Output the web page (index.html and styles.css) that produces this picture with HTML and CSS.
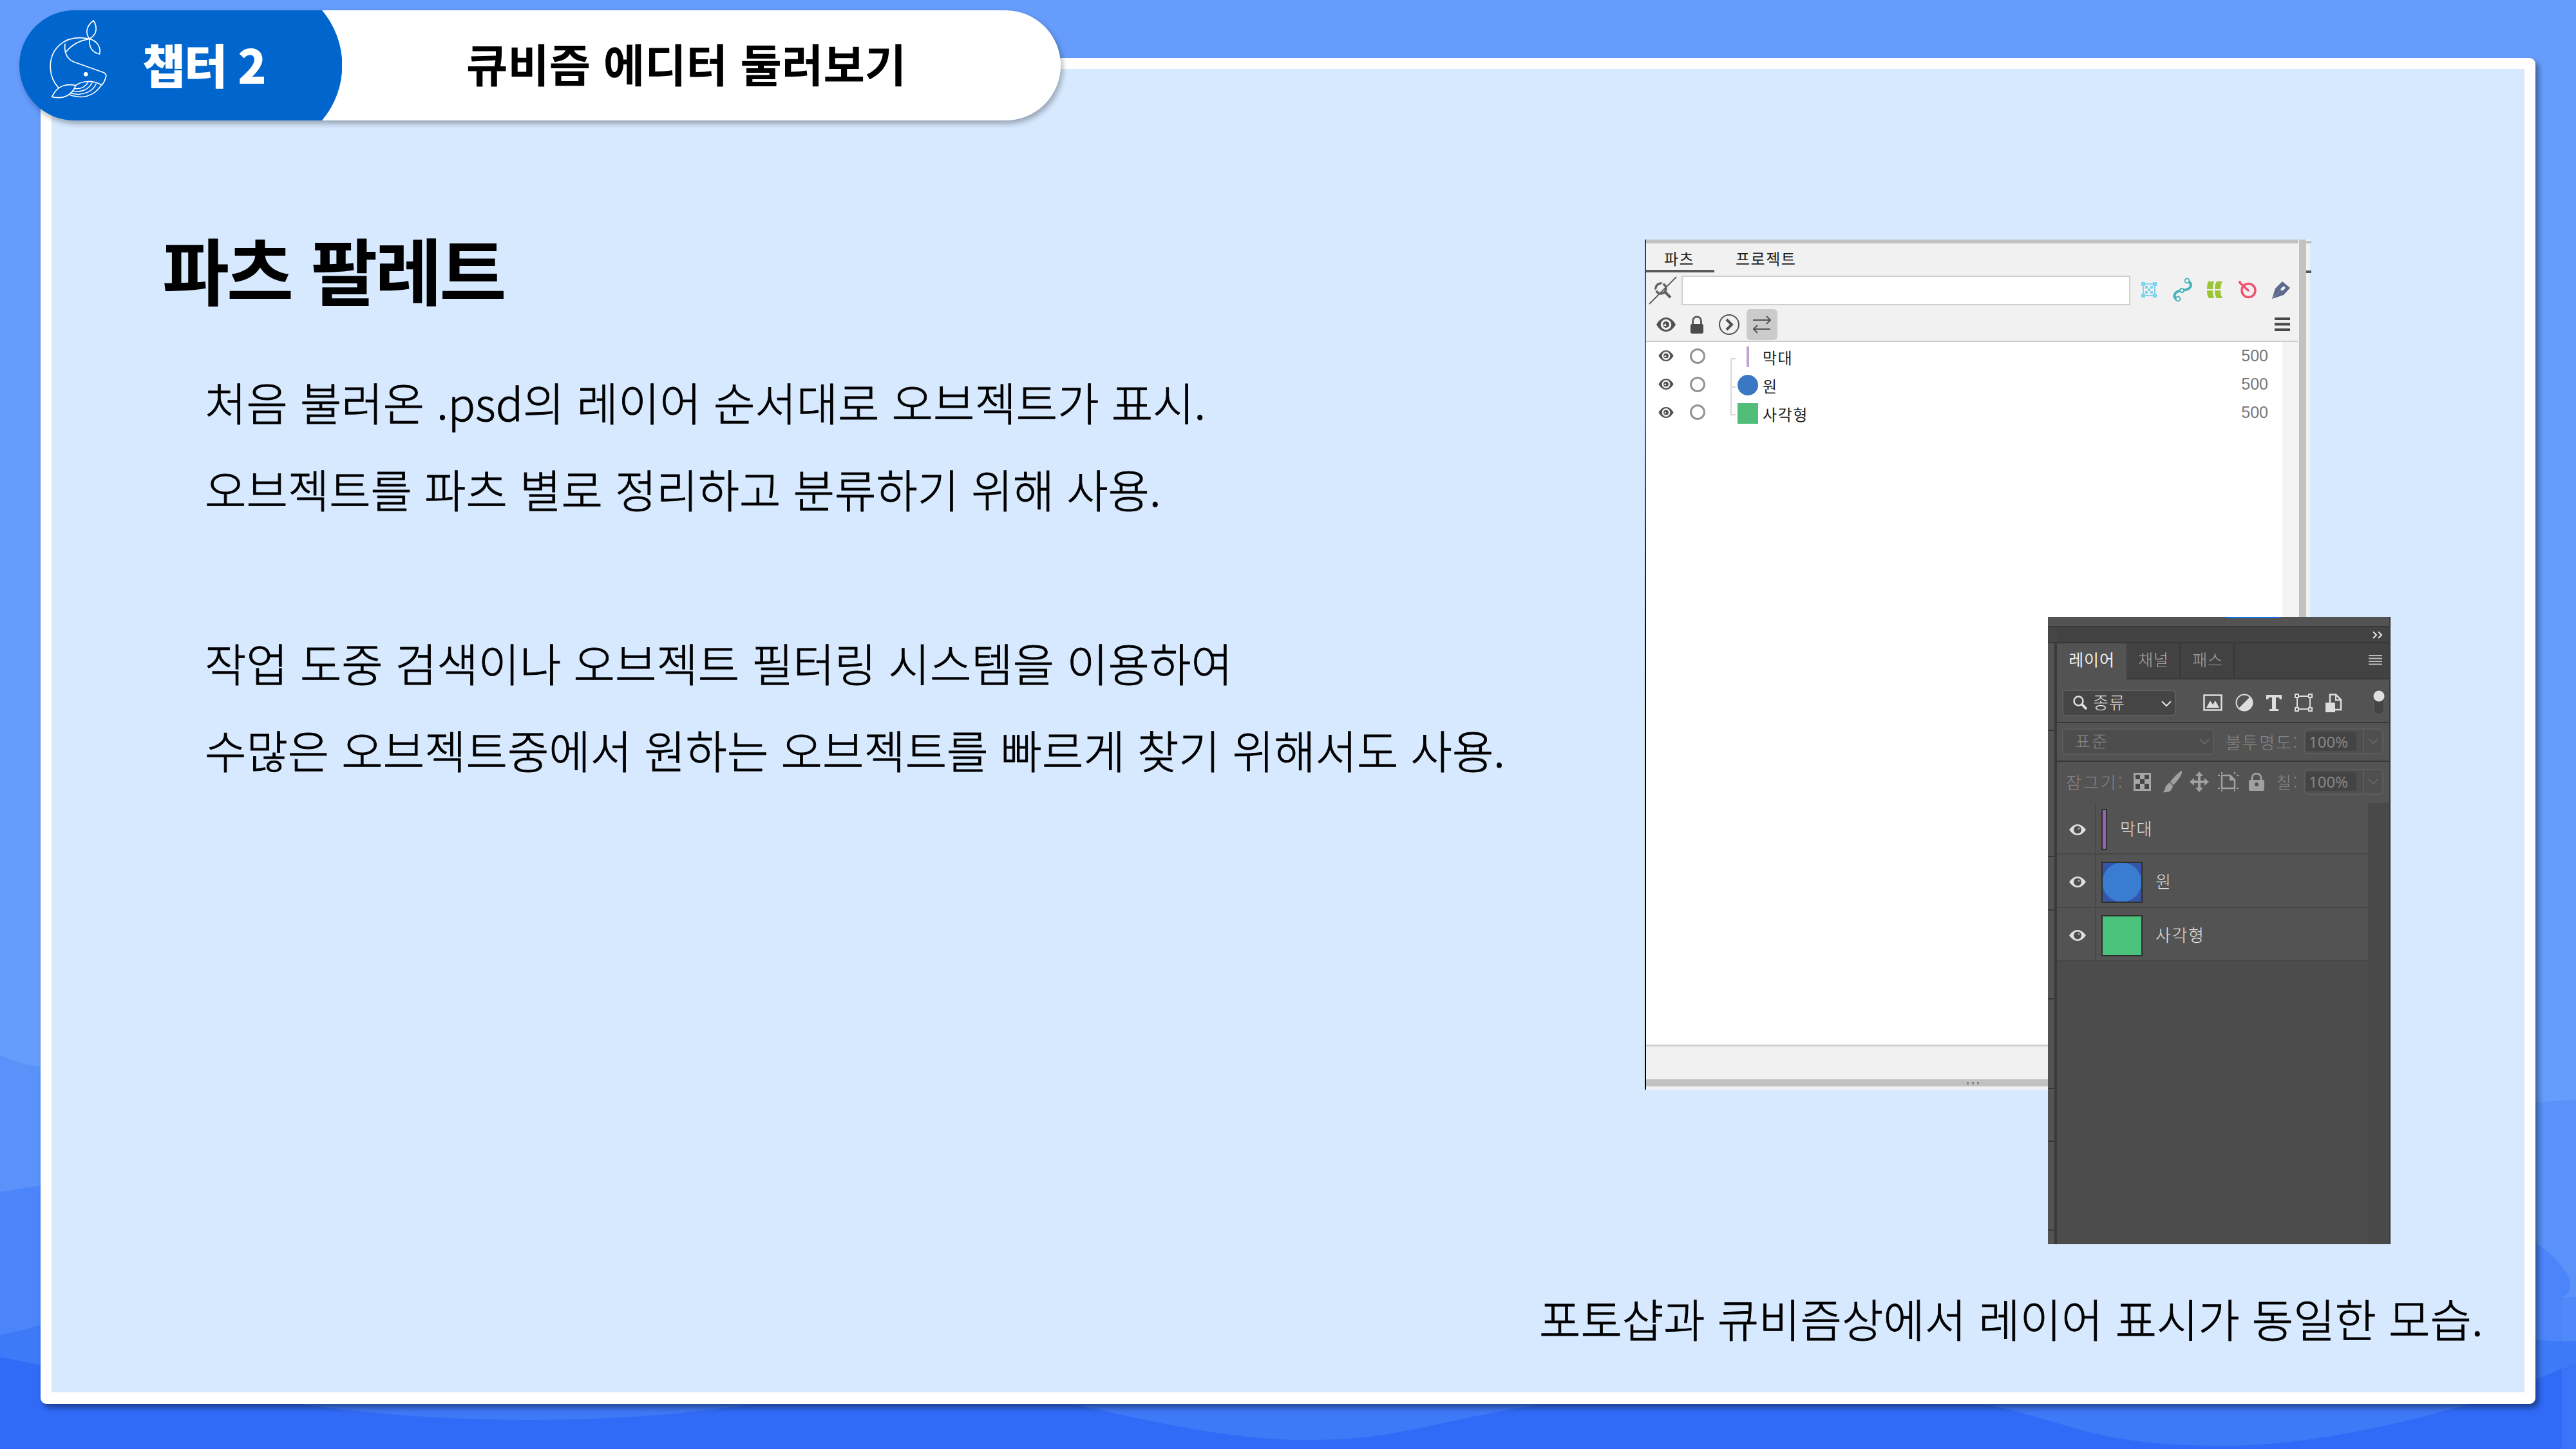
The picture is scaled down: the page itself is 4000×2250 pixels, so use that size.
FILE: index.html
```html
<!DOCTYPE html>
<html lang="ko">
<head>
<meta charset="utf-8">
<title>큐비즘 에디터 둘러보기</title>
<link rel="stylesheet" href="styles.css">
</head>
<body>
<svg class="defs" width="0" height="0" aria-hidden="true">
  <symbol id="eye" viewBox="0 0 30 22"><path d="M0 11C4 4 9 0 15 0s11 4 15 11c-4 7-9 11-15 11S4 18 0 11z" fill="#505050"/><circle cx="15" cy="11" r="8.3" fill="#f1f1f1"/><circle cx="15" cy="11" r="5" fill="#505050"/><path d="M10.5 13l4-4 1 4z" fill="#f1f1f1"/></symbol>
  <symbol id="eye-light" viewBox="0 0 26 17"><path d="M0 8.500Q6 0 13 0t13 8.500Q20 17 13 17T0 8.500z" fill="#e0e0e0"/><circle cx="13" cy="8.500" r="6" fill="#4d4d4d"/><circle cx="15" cy="6.500" r="1.500" fill="#aaa"/></symbol>
  <symbol id="chevron" viewBox="0 0 16 10"><path d="M1 1l7 7 7-7" fill="none" stroke="currentColor" stroke-width="2"/></symbol>
</svg>
<main class="slide">
  <svg class="waves" viewBox="0 0 4000 2250" aria-hidden="true">
    <path fill="#5a92fa" d="M0 1638Q32 1653 63 1656L400 1850H3500L3938 1712Q3970 1709 4000 1708V2250H0z"/>
    <path fill="#4c85f9" d="M0 1851Q32 1846 63 1841L400 1900H3900L3938 1930C3975 1955 4012 2000 3978 2014V2250H0z"/>
    <path fill="#5089f9" d="M3978 2014h22v70h-22z"/>
    <path fill="#3e79f7" d="M0 2073Q32 2067 63 2057L400 2080H3938Q3970 2084 4000 2082V2250H0z"/>
    <path fill="#306af6" d="M0 2107L63 2120L473 2181C690 2212 950 2214 1161 2181H1670C1850 2222 1935 2236 2035 2236C2170 2236 2220 2208 2390 2181H3085C3220 2209 3250 2245 3450 2245C3590 2245 3730 2210 3832 2181L3938 2142Q3975 2127 4000 2116V2250H0z"/>
    <path fill="#3b74f7" d="M3978 2125l22-9v134h-22z"/>
  </svg>

  <section class="frame">
    <article class="copy">
      <h1>파츠 팔레트</h1>
      <p>처음 불러온 .psd의 레이어 순서대로 오브젝트가 표시.</p>
      <p>오브젝트를 파츠 별로 정리하고 분류하기 위해 사용.</p>
      <p class="gap">작업 도중 검색이나 오브젝트 필터링 시스템을 이용하여</p>
      <p>수많은 오브젝트중에서 원하는 오브젝트를 빠르게 찾기 위해서도 사용.</p>
    </article>

    <figure class="example">
      <div class="shots">
        <div class="cubism">
          <div class="cu-main">
            <div class="cu-tabs"><span class="cu-tab on">파츠</span><span class="cu-tab">프로젝트</span></div>
            <div class="cu-search">
              <svg width="44" height="44" viewBox="0 0 44 44" fill="none" stroke="#606060"><circle cx="19" cy="19" r="8" stroke-width="3.500"/><path d="M25 24l9 9" stroke-width="4"/><path d="M4 34L34 4" transform="translate(-2.500 -2.500)" stroke="#f1f1f1" stroke-width="2"/><path d="M1 43L43 1" stroke-width="2"/></svg>
              <span class="cu-input"></span>
              <svg width="26" height="26" viewBox="0 0 26 26"><path d="M4 4h18v18H4z" fill="none" stroke="#7fd4ee" stroke-width="2"/><path fill="#7fd4ee" d="M1 1h6v6H1zM19 1h6v6h-6zM1 19h6v6H1zM19 19h6v6h-6zM7 7h4v4H7zM15 7h4v4h-4zM11 11h4v4h-4zM7 15h4v4H7zM15 15h4v4h-4z"/></svg>
              <svg class="s2" width="32" height="38" viewBox="0 0 32 38" fill="none" stroke="#45b3b8"><path d="M25 5c9 9 1 14-10 15S0 29 7 34" stroke-width="4"/><g fill="#f1f1f1" stroke-width="1.800"><circle cx="23" cy="5" r="3.500"/><circle cx="15" cy="20" r="3"/><circle cx="9" cy="33" r="3.500"/></g></svg>
              <svg class="s3" width="26" height="28" viewBox="0 0 26 28" fill="#9dc435"><path d="M3 1h9q-2 6-2 12H1Q1 5 3 1zM16 1h9q-3 5-3 12h-9q0-8 3-12zM1 15h9q0 7 2 12H4Q1 23 1 15zM13 15h9q0 7 3 12h-9q-3-4-3-12z"/></svg>
              <svg class="s4" width="28" height="28" viewBox="0 0 28 28" fill="none" stroke="#f2506e" stroke-width="3.500"><circle cx="15.500" cy="15" r="10.500"/><path d="M2 1v2l13 12" stroke-linecap="round"/></svg>
              <svg class="s5" width="28" height="28" viewBox="0 0 28 28"><path fill="#5d6a90" d="M0 28L5 12 16 1l12 10L18 22z"/><path d="M18 8l3 3-5 5-3-3z" fill="#f1f1f1"/><path d="M1 27L14 15" stroke="#8a93ae"/></svg>
            </div>
            <div class="cu-tools">
              <svg class="t-eye" width="30" height="22"><use href="#eye"/></svg>
              <svg class="t-lock" width="22" height="28" viewBox="0 0 22 28"><path d="M4.500 14V9C4.500-.5 17.500-.5 17.500 9v5" fill="none" stroke="#606060" stroke-width="3"/><rect x="1" y="13" width="20" height="15" rx="3" fill="#4c4c4c"/></svg>
              <svg class="t-go" width="32" height="32" viewBox="0 0 32 32" fill="none" stroke="#505050"><circle cx="16" cy="16" r="15" stroke-width="2"/><path d="M12 8l8 8-8 8" stroke-width="4"/></svg>
              <span class="cu-toggle"><svg width="28" height="28" viewBox="0 0 28 28" fill="none" stroke="#555" stroke-width="2"><path d="M0 7h27M21 1l6 6-6 6M27 21H1M7 15l-6 6 6 6"/></svg></span>
              <svg class="t-menu" width="24" height="22" viewBox="0 0 24 22" fill="#484848"><path d="M0 0h24v4H0zM0 8.500h24v4H0zM0 17h24v4H0z"/></svg>
            </div>
            <div class="cu-list">
              <div class="cu-rows">
                <div class="cu-row"><svg width="24" height="17"><use href="#eye"/></svg><i class="ring"></i><i class="tree first"></i><span class="chip"><i class="c-bar"></i></span><span class="nm">막대</span><span class="num">500</span></div>
                <div class="cu-row"><svg width="24" height="17"><use href="#eye"/></svg><i class="ring"></i><i class="tree"></i><span class="chip"><i class="c-dot"></i></span><span class="nm">원</span><span class="num">500</span></div>
                <div class="cu-row"><svg width="24" height="17"><use href="#eye"/></svg><i class="ring"></i><i class="tree last"></i><span class="chip"><i class="c-sq"></i></span><span class="nm">사각형</span><span class="num">500</span></div>
              </div>
              <div class="cu-scroll"></div>
            </div>
            <div class="cu-foot"></div>
          </div>
          <div class="cu-split"></div>
          <div class="cu-next"></div>
          <div class="cu-grip"><i></i><i></i><i></i></div>
        </div>

        <div class="ps">
          <svg class="ps-side" width="14" height="974" viewBox="0 0 14 974" aria-hidden="true"><path fill="#535353" d="M0 0h14v974H0z"/><path fill="#454545" d="M0 16h14v23H0z"/><path fill="#383838" d="M0 14h14v2H0zM0 39h11v2H0zM0 175h11v2H0zM0 371h11v2H0zM0 454h11v2H0zM0 592h11v2H0zM0 731h11v2H0zM0 813h11v2H0zM0 951h11v2H0z"/><path fill="#3a3a3a" d="M10 39h4v935h-4z"/></svg>
          <div class="ps-main">
            <div class="ps-top"><i></i></div>
            <div class="ps-bar"><svg width="16" height="12" viewBox="0 0 16 12" fill="none" stroke="#ddd" stroke-width="2.200"><path d="M1 1l5 5-5 5M9 1l5 5-5 5"/></svg></div>
            <div class="ps-tabs"><span class="ps-tab on">레이어</span><span class="ps-tab">채널</span><span class="ps-tab">패스</span><span class="ps-menu"><svg width="21" height="16" viewBox="0 0 21 16" fill="#bbb"><path d="M0 0h21v2H0zM0 4.500h21v2H0zM0 9h21v2H0zM0 13.500h21v2H0z"/></svg></span></div>
            <div class="ps-filter">
              <span class="ps-kind"><svg width="22" height="22" viewBox="0 0 22 22" fill="none" stroke="#ddd"><circle cx="8.500" cy="8.500" r="7" stroke-width="2.600"/><path d="M13 13l8 8" stroke-width="4"/></svg><b>종류</b><svg class="end" width="16" height="10"><use href="#chevron"/></svg></span>
              <svg width="30" height="26" viewBox="0 0 30 26"><path d="M1.500 1.500h27v23h-27z" fill="none" stroke="#ddd" stroke-width="2.500"/><path d="M5 21l6-11 4 6 4-6 6 11z" fill="#ddd"/></svg>
              <svg width="28" height="28" viewBox="0 0 28 28"><circle cx="14" cy="14" r="12.500" fill="none" stroke="#ddd" stroke-width="2"/><path d="M23 5A12.500 12.500 0 1 1 5 23z" fill="#ddd"/></svg>
              <svg width="24" height="25" viewBox="0 0 24 25"><path d="M0 0h24v7h-3l-1-3h-5v18h4v3H5v-3h4V4H4L3 7H0z" fill="#ddd"/></svg>
              <svg width="28" height="28" viewBox="0 0 28 28" fill="none" stroke="#ddd" stroke-width="2"><path d="M4 4h20v20H4z"/><path fill="#535353" d="M1 1h5v5H1zM22 1h5v5h-5zM1 22h5v5H1zM22 22h5v5h-5z"/></svg>
              <svg width="26" height="29" viewBox="0 0 26 29"><path d="M7 14V1.500h9l8 8V25H15" fill="none" stroke="#ddd" stroke-width="2.600"/><path d="M16 1v9h9" fill="none" stroke="#ddd" stroke-width="2"/><path d="M0 14h15v15H0z" fill="#ddd"/></svg>
              <svg class="sw" width="18" height="38" viewBox="0 0 18 38"><rect x="1" y="2" width="16" height="35" rx="8" fill="#444" stroke="#5f5f5f"/><circle cx="9" cy="9" r="8.500" fill="#e0e0e0"/></svg>
            </div>
            <div class="ps-blend"><span class="ps-select"><b>표준</b><svg class="end" width="16" height="10"><use href="#chevron"/></svg></span><b class="lab-op">불투명도:</b><span class="ps-field"><b>100%</b><i><svg width="16" height="10"><use href="#chevron"/></svg></i></span></div>
            <div class="ps-lock"><b class="lab-lock">잠그기:</b>
              <svg class="k1" width="27" height="28" viewBox="0 0 27 28"><path d="M0 0h27v28H0z" fill="#a6a6a6"/><path fill="#444" d="M3 3h7v7H3zM17 3h7v7h-7zM10 10h7v7h-7zM3 17h7v8H3zM17 17h7v8h-7z"/></svg>
              <svg class="k2" width="31" height="34" viewBox="0 0 31 34" fill="#a0a0a0"><path d="M30 0q2 6-13 22l-5-5Q24 2 30 0zM11 18l5 5q-1 12-16 10 3-1 4-6t7-9z"/></svg>
              <svg class="k3" width="30" height="32" viewBox="0 0 30 32" fill="#a0a0a0"><path d="M15 0l6 7h-4v7h6v-4l7 6-7 6v-4h-6v7h4l-6 7-6-7h4v-7H7v4l-7-6 7-6v4h6V7H9z"/></svg>
              <svg class="k4" width="33" height="30" viewBox="0 0 33 30"><path d="M6 5h13l7 7v13H6z" fill="none" stroke="#a0a0a0" stroke-width="2.500"/><path d="M18 4v9h9z" fill="#a0a0a0"/><path fill="#a0a0a0" d="M5 0h2v3H5zM25 0h2v3h-2zM5 27h2v3H5zM25 27h2v3h-2zM0 4h3v2H0zM29 4h3v2h-3zM0 24h3v2H0zM29 24h3v2h-3z"/></svg>
              <svg class="k5" width="24" height="28" viewBox="0 0 24 28"><path d="M5 13V8C5-1 19-1 19 8v5" fill="none" stroke="#a0a0a0" stroke-width="3"/><rect y="11" width="24" height="17" rx="2" fill="#a0a0a0"/><circle cx="12" cy="18" r="3" fill="#505050"/></svg>
              <b class="lab-fill">칠:</b><span class="ps-field"><b>100%</b><i><svg width="16" height="10"><use href="#chevron"/></svg></i></span></div>
            <div class="ps-body">
              <div class="ps-layers">
                <div class="ps-layer"><span class="vis"><svg width="26" height="17"><use href="#eye-light"/></svg></span><i class="th bar"></i><b>막대</b></div>
                <div class="ps-layer mid"><span class="vis"><svg width="26" height="17"><use href="#eye-light"/></svg></span><i class="th blue"></i><b>원</b></div>
                <div class="ps-layer mid"><span class="vis"><svg width="26" height="17"><use href="#eye-light"/></svg></span><i class="th green"></i><b>사각형</b></div>
              </div>
              <div class="ps-scroll"></div>
            </div>
          </div>
        </div>
      </div>
      <figcaption>포토샵과 큐비즘상에서 레이어 표시가 동일한 모습.</figcaption>
    </figure>
  </section>

  <header class="head">
    <div class="chapter">
      <svg class="whale" width="160" height="140" viewBox="0 0 480 420" fill="none" stroke="#fff" stroke-width="5" stroke-linejoin="round" aria-hidden="true">
        <path d="M316 6C279 32 278 67 297 91C332 70 335 38 316 6z"/>
        <path d="M297 91C339 103 350 135 344 162C308 154 294 128 297 91z"/>
        <path d="M297 91C175 65 110 145 115 230C117 270 135 300 153 320"/>
        <path d="M184 113C178 140 184 180 221 197L364 248Q378 256 373 269Q366 295 353 306"/>
        <path d="M184 156C215 115 252 98 297 91"/>
        <path d="M122 361C147 309 185 298 233 308C217 350 180 375 122 361z"/>
        <path d="M233 308C265 283 315 284 353 306C315 362 260 372 202 351"/>
        <path d="M228 323C260 325 280 313 291 292M220 334C262 342 295 325 310 294M212 344C264 360 315 335 328 299" stroke-width="4.500"/>
        <circle cx="280" cy="256" r="10" fill="#fff" stroke="none"/>
      </svg>
      <span>챕터 2</span>
    </div>
    <div class="topic">큐비즘 에디터 둘러보기</div>
  </header>
</main>
</body>
</html>
```
FILE: styles.css
```css
* { box-sizing: border-box; }
body { margin: 0; font-family: "Noto Sans CJK KR", "Noto Sans", sans-serif; color: #000; }
h1, p, figure { margin: 0; }
b { font-weight: 400; }
i { display: block; }
svg { display: block; flex: none; }
.defs { position: absolute; }

.slide { position: relative; width: 4000px; height: 2250px; overflow: hidden; padding: 90px 63px 70px; background: #669cfb; display: flex; }
.waves { position: absolute; inset: 0; width: 4000px; height: 2250px; }

.frame { position: relative; flex: 1; display: grid; grid-template-columns: 2310px 1fr; border: 17px solid #fff; border-bottom-width: 18px; border-radius: 9px; background: #d7e9ff; box-shadow: 5px 6px 8px rgba(0, 0, 0, .4); }

/* header */
.head { position: absolute; left: 30px; top: 16px; width: 1617px; height: 171px; display: flex; border-radius: 86px; background: linear-gradient(90deg, #0066ce 300px, #fff 300px); box-shadow: 3px 5px 8px rgba(0, 0, 0, .3); }
.chapter { width: 501px; display: flex; align-items: center; background: #0066ce; color: #fff; clip-path: path("M86 0H470A132 132 0 0 1 470 171H86A85.500 85.500 0 0 1 86 0z"); }
.whale { margin-left: 10px; margin-top: -3px; }
.chapter span { margin-left: 21px; padding-bottom: 7px; font-size: 73px; font-weight: 900; letter-spacing: -2.2px; white-space: nowrap; }
.topic { margin-left: 193px; line-height: 164px; font-size: 70px; font-weight: 700; white-space: nowrap; }

/* copy */
.copy { padding: 231px 0 0 238px; }
.copy h1 { margin-left: -66px; height: 218px; line-height: 156px; font-size: 113px; font-weight: 700; letter-spacing: -4px; word-spacing: 3px; white-space: nowrap; }
.copy p, figcaption { font-size: 70px; font-weight: 300; line-height: 135px; white-space: nowrap; word-spacing: -.5px; -webkit-text-stroke: .9px #000; }
.copy .gap { margin-top: 135px; }

.example { display: flex; flex-direction: column; padding-top: 265px; }
.shots { position: relative; width: 1158px; height: 1560px; margin-left: 164px; }
.example figcaption { margin-top: 47px; }

/* Cubism parts palette */
.cubism { width: 1033px; height: 1320px; display: grid; grid-template-columns: 1014px 11px 8px; grid-template-rows: 1304px 16px; border-left: 2px solid; border-image: linear-gradient(#0038d0, #0b60ff 10%, #0b60ff 22%, #001040 45%, #000 60%) 1; background: #f1f1f1; font-size: 24px; color: #1c1c1c; }
.cu-main { display: flex; flex-direction: column; border-top: 6px solid #c1c1c1; width: 1012px; }
.cu-tabs { display: flex; height: 45px; }
.cu-tab { width: 106px; padding-left: 28px; line-height: 46px; letter-spacing: 1.5px; white-space: nowrap; }
.cu-tab.on { border-bottom: 4px solid #5a5a5a; }
.cu-tab + .cu-tab { padding-left: 33px; }
.cu-search { display: flex; align-items: center; height: 55px; padding-left: 4px; }
.cu-input { width: 697px; height: 46px; margin: 0 16px 0 7px; border: 2px solid #cfcfcf; background: #fff; }
.cu-search .s2 { margin-left: 23px; }
.cu-search .s3 { margin-left: 21px; }
.cu-search .s4, .cu-search .s5 { margin-left: 24px; }
.cu-search .cu-input ~ svg { margin-bottom: 2px; }
.cu-tools { display: flex; align-items: center; height: 51px; padding: 0 12px 0 16px; }
.t-lock { margin-left: 22px; }
.t-go { margin-left: 23px; }
.cu-toggle { display: grid; place-items: center; width: 48px; height: 48px; margin-left: 11px; border-radius: 6px; background: #cbcbcb; }
.t-menu { margin-left: auto; }
.cu-list { flex: 1; display: flex; border-top: 2px solid #ccc; border-bottom: 3px solid #d0d0d0; background: #fff; }
.cu-rows { flex: 1; }
.cu-row { display: flex; align-items: center; height: 43.7px; padding-right: 22px; }
.cu-row > svg { margin-left: 19px; }
.ring { width: 24px; height: 24px; margin-left: 25px; border: 3.5px solid #939393; border-radius: 50%; }
.tree { align-self: stretch; width: 9px; margin-left: 39px; background: linear-gradient(#d8d8d8, #d8d8d8) 0 0 / 2px 100% no-repeat, linear-gradient(#d8d8d8, #d8d8d8) 0 25px / 8px 2px no-repeat; }
.tree.first { background-size: 2px 19px, 8px 2px; background-position: 0 25px, 0 25px; }
.tree.last { background-size: 2px 26px, 8px 2px; }
.chip { display: grid; place-items: center; width: 32px; height: 32px; margin: 3px 7px 0 2px; }
.c-bar { width: 4px; height: 32px; background: #c4a5d2; }
.c-dot { width: 32px; height: 32px; border-radius: 50%; background: #3b78c4; }
.c-sq { width: 32px; height: 32px; background: #50be78; }
.nm { padding-top: 4px; letter-spacing: 1.5px; white-space: nowrap; }
.num { margin-left: auto; font-family: "Liberation Sans", sans-serif; font-size: 25px; color: #777; }
.cu-scroll { width: 24px; background: #f4f4f4; }
.cu-foot { height: 51px; }
.cu-split { background: #c2c2c2; }
.cu-next { background: linear-gradient(#555, #555) 0 48px / 8px 4px no-repeat, linear-gradient(#c1c1c1, #c1c1c1) 0 2px / 8px 4px no-repeat; }
.cu-grip { grid-column: 1 / -1; display: flex; gap: 5px; height: 11px; padding: 4px 0 0 498px; background: #c1c1c1; }
.cu-grip i { width: 3px; height: 4px; background: #888; }

/* Photoshop layers panel */
.ps { position: absolute; left: 626px; top: 586px; width: 532px; height: 974px; display: flex; background: #535353; color: #e4e4e4; font-size: 26px; font-weight: 300; }
.ps b { font-weight: 300; white-space: nowrap; }
.ps-main { flex: 1; display: flex; flex-direction: column; border-right: 2px solid #3a3a3a; }
.ps-top { height: 16px; border-bottom: 2px solid #383838; }
.ps-top i { width: 82px; height: 2px; margin-left: 263px; background: #1473e6; }
.ps-bar { display: flex; justify-content: flex-end; align-items: center; height: 25px; padding-right: 10px; border-bottom: 2px solid #383838; background: #424242; }
.ps-tabs { display: flex; height: 56px; background: #424242; }
.ps-tab { display: flex; justify-content: center; width: 84px; line-height: 48px; font-size: 25px; letter-spacing: .8px; padding-left: 2px; border-right: 2px solid #383838; border-bottom: 2px solid #383838; color: #a8a8a8; }
.ps-tab.on { width: 108px; font-weight: 400; color: #eee; background: #535353; border-color: #535353; }
.ps-menu { flex: 1; display: flex; justify-content: flex-end; align-items: center; padding: 0 11px 2px 0; border-bottom: 2px solid #383838; }
.ps-filter { display: flex; align-items: center; height: 68px; padding: 6px 7px 0 8px; border-bottom: 2px solid #383838; }
.ps-kind { display: flex; align-items: center; width: 177px; height: 41px; margin-right: 42px; padding: 0 5px 0 15px; border: 2px solid #5f5f5f; border-radius: 6px; background: #454545; }
.ps-kind b { margin-left: 9px; margin-top: -4px; letter-spacing: 1px; color: #e8e8e8; }
.end { margin-left: auto; position: relative; top: 2px; }
.ps-filter > svg { margin-right: 20px; }
.ps-filter > svg.sw { margin: 0 0 0 auto; }
.ps-blend, .ps-lock { display: flex; align-items: center; color: #868686; }
.ps-blend { height: 60px; padding: 0 9px 2px 8px; border-bottom: 2px solid #383838; }
.ps-select { display: flex; align-items: center; width: 236px; height: 41px; padding: 0 5px 3px 18px; border: 2px solid #5c5c5c; border-radius: 6px; background: #4d4d4d; }
.ps-select b { letter-spacing: 2px; }
.lab-op { margin-left: 18px; letter-spacing: 2.2px; }
.ps-field { display: flex; align-items: center; width: 124px; height: 40px; margin-left: auto; padding-left: 2px; border: 2px solid #5c5c5c; border-radius: 6px; background: #4f4f4f; }
.ps-field b { width: 78px; height: 29px; padding-left: 4px; font: 400 24px/29px "Noto Sans", sans-serif; background: #444; }
.ps-field i { margin-left: 10px; width: 30px; height: 36px; display: grid; place-items: center; border-left: 2px solid #5c5c5c; color: #666; }
.ps-select .end { color: #666; }
.ps-lock { height: 64px; padding: 0 9px 3px 14px; }
.lab-lock { width: 105px; letter-spacing: 3px; }
.k2 { margin-left: 18px; } .k3 { margin-left: 11px; } .k4 { margin-left: 14px; } .k5 { margin-left: 15px; }
.lab-fill { margin-left: 18px; letter-spacing: 3px; }
.ps-body { flex: 1; display: flex; background: #4c4c4c; }
.ps-layers { width: 483px; }
.ps-layer { display: flex; align-items: center; height: 80px; border-bottom: 2px solid #474747; background: #535353; }
.ps-layer.mid { height: 83px; }
.vis { display: grid; place-items: center; align-self: stretch; width: 61px; padding: 4px 0 0 4px; margin-right: 8px; border-right: 2px solid #494949; }
.th { width: 64px; height: 64px; margin: 4px 20px 0 0; border: 2px solid #2f2f2f; }
.th.bar { width: 9px; background: #9560b5; }
.th.blue { background: radial-gradient(circle, #3a7ccf 30px, #3556a8 31px); }
.th.green { background: #4bc27c; }
.ps-scroll { flex: 1; background: #494949; }
.ps-layer b { padding-bottom: 1px; letter-spacing: 1.6px; }
```
